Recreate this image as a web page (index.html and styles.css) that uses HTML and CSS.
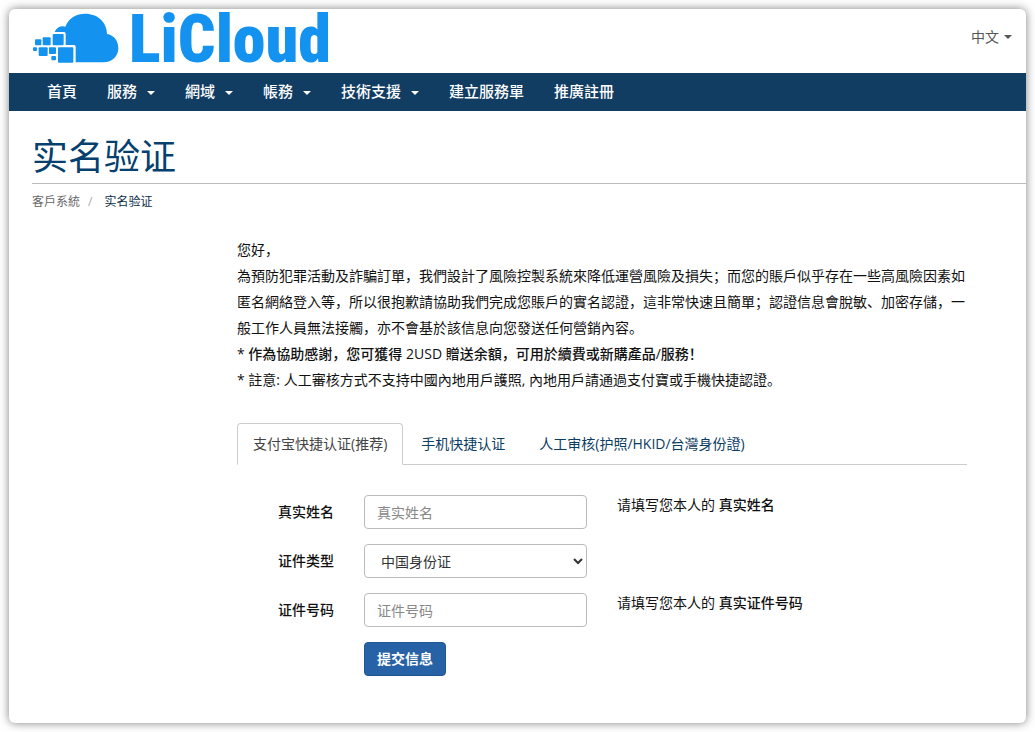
FILE: index.html
```html
<!DOCTYPE html>
<html lang="zh-CN">
<head>
<meta charset="utf-8">
<meta name="viewport" content="width=device-width, initial-scale=1">
<title>实名验证 - LiCloud</title>
<link rel="stylesheet" href="styles.css">
</head>
<body>
<div class="panel">
  <header class="top">
    <a class="logo" href="#">
      <svg class="logo-mark" viewBox="100 38 258 150" aria-hidden="true">
        <path d="M228 186V139Q228 134 223 134H198V100Q198 95 193 95H165Q172 78 190 78Q195 78 197 79C207 53 230 40 257 40C294 40 322 66 322 101C343 104 356 122 356 144C356 168 337 186 312 186Z"/>
        <rect x="175" y="141" width="46" height="46" rx="3"/>
        <rect x="159" y="101" width="33" height="34" rx="3"/>
        <rect x="129" y="111" width="24" height="24" rx="3"/>
        <rect x="106" y="117" width="19" height="18" rx="3"/>
        <rect x="100" y="141" width="12" height="11" rx="3"/>
        <rect x="117" y="141" width="27" height="26" rx="3"/>
        <rect x="148" y="141" width="21" height="20" rx="3"/>
        <rect x="155" y="167" width="14" height="13" rx="3"/>
      </svg>
      <span class="logo-text">LiCloud</span>
    </a>
    <button class="lang" type="button">中文<span class="caret"></span></button>
  </header>
  <nav class="nav">
    <a href="#">首頁</a>
    <a href="#">服務<span class="caret"></span></a>
    <a href="#">網域<span class="caret"></span></a>
    <a href="#">帳務<span class="caret"></span></a>
    <a href="#">技術支援<span class="caret"></span></a>
    <a href="#">建立服務單</a>
    <a href="#">推廣註冊</a>
  </nav>
  <div class="heading">
    <h1>实名验证</h1>
    <ol class="crumbs">
      <li><a href="#">客戶系統</a></li>
      <li>实名验证</li>
    </ol>
  </div>
  <main class="content">
    <div class="notice">
      <p>您好，</p>
      <p>為預防犯罪活動及詐騙訂單，我們設計了風險控製系統來降低運營風險及損失；而您的賬戶似乎存在一些高風險因素如匿名網絡登入等，所以很抱歉請協助我們完成您賬戶的實名認證，這非常快速且簡單；認證信息會脫敏、加密存儲，一般工作人員無法接觸，亦不會基於該信息向您發送任何營銷內容。</p>
      <p>* <strong>作為協助感謝，您可獲得 2USD 贈送余額，可用於續費或新購產品/服務！</strong></p>
      <p>* 註意: 人工審核方式不支持中國內地用戶護照, 內地用戶請通過支付寶或手機快捷認證。</p>
    </div>
    <div class="tabs">
      <a class="tab active" href="#">支付宝快捷认证(推荐)</a>
      <a class="tab" href="#">手机快捷认证</a>
      <a class="tab" href="#">人工审核(护照/HKID/台灣身份證)</a>
    </div>
    <form class="form">
      <div class="row">
        <label for="name">真实姓名</label>
        <input class="control" id="name" type="text" placeholder="真实姓名">
        <span class="help">请填写您本人的 <strong>真实姓名</strong></span>
      </div>
      <div class="row">
        <label for="type">证件类型</label>
        <select class="control" id="type"><option>中国身份证</option></select>
      </div>
      <div class="row">
        <label for="number">证件号码</label>
        <input class="control" id="number" type="text" placeholder="证件号码">
        <span class="help">请填写您本人的 <strong>真实证件号码</strong></span>
      </div>
      <div class="row">
        <button class="submit" type="submit">提交信息</button>
      </div>
    </form>
  </main>
</div>
</body>
</html>
```
FILE: styles.css
```css
* {
  box-sizing: border-box;
}

body {
  margin: 0;
  padding: 9px;
  background: #fff;
  color: #111;
  font: 400 14px/26px "Open Sans", "Noto Sans CJK SC", sans-serif;
}

a {
  color: #0b3c62;
  text-decoration: none;
}

.panel {
  padding-bottom: 47px;
  border-radius: 6px;
  background: #fff;
  box-shadow: 0 0 10px rgba(0, 0, 0, 0.5);
}

.top {
  display: flex;
  align-items: flex-start;
  justify-content: space-between;
  height: 64px;
  padding: 0 14px 0 24px;
}

.logo {
  display: flex;
  align-items: center;
  gap: 10px;
  height: 58px;
  color: #1492f0;
}

.logo-mark {
  width: 86px;
  height: 50px;
  fill: currentColor;
}

.logo-text {
  padding-top: 4px;
  font: 900 66px/58px "Roboto Condensed", "Liberation Sans Narrow", "DejaVu Sans Condensed", sans-serif;
}

.caret {
  border: 4px solid transparent;
  border-top-color: currentColor;
  border-bottom: 0;
}

.lang {
  display: flex;
  align-items: center;
  gap: 5px;
  height: 56px;
  padding: 0;
  border: 0;
  background: none;
  color: #555;
  font: inherit;
}

.nav {
  display: flex;
  height: 38px;
  background: #113d63;
}

.nav a {
  display: flex;
  align-items: center;
  gap: 10px;
  padding: 0 15px 2px;
  color: #fff;
  font-size: 15px;
  font-weight: 500;
  font-family: "Noto Sans CJK TC", sans-serif;
}

.nav .caret {
  margin-top: 3px;
}

.nav a:first-child {
  margin-left: 23px;
}

.heading {
  padding-left: 23px;
}

h1 {
  margin: 0;
  padding: 26px 0 6px;
  border-bottom: 1px solid #bbb;
  color: #05406f;
  font-size: 36px;
  font-weight: 400;
  line-height: 40px;
}

.crumbs {
  display: flex;
  margin: 0;
  padding: 9px 0 7px;
  list-style: none;
  color: #0b2c48;
  font-size: 12px;
  line-height: 18px;
}

.crumbs a {
  color: #666;
}

.crumbs li + li::before {
  content: "/";
  padding: 0 12px 0 8px;
  color: #aaa;
}

.content {
  padding: 19px 59px 0 228px;
}

.notice p {
  margin: 0;
}

strong {
  font-weight: 500;
}

.tabs {
  display: flex;
  margin-top: 30px;
  border-bottom: 1px solid #ccc;
}

.tab {
  margin: 0 2px -1px 0;
  padding: 7px 15px;
  border: 1px solid transparent;
  line-height: 26px;
  white-space: nowrap;
}

.tab.active {
  border-color: #ccc;
  border-bottom-color: #fff;
  border-radius: 4px 4px 0 0;
  background: #fff;
  color: #444;
}

.form {
  display: grid;
  gap: 15px;
  padding-top: 30px;
}

.row {
  display: grid;
  grid-template-columns: 97fr 223fr 350fr;
  column-gap: 30px;
  min-height: 34px;
}

.row label {
  align-self: center;
  text-align: right;
  font-weight: 500;
}

.control {
  width: 100%;
  height: 34px;
  padding: 0 12px;
  border: 1px solid #bbb;
  border-radius: 4px;
  background: #fff;
  color: #333;
  font: inherit;
}

.control::placeholder {
  color: #888;
}

select.control {
  padding: 0 0 0 12px;
}

.help {
  height: 20px;
  line-height: 20px;
}

.submit {
  grid-column: 2;
  justify-self: start;
  height: 34px;
  padding: 0 12px;
  border: 1px solid #20558f;
  border-radius: 4px;
  background: #2862a6;
  color: #fff;
  font: inherit;
  font-weight: 700;
}
```
